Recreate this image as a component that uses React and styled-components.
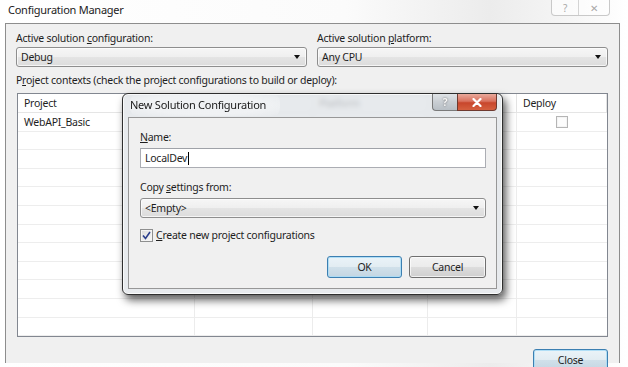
import React from "react";
import styled, { createGlobalStyle } from "styled-components";

const GlobalStyle = createGlobalStyle`
  html, body {
    margin: 0;
    padding: 0;
    background: #ffffff;
  }
  * {
    box-sizing: border-box;
  }
`;

const FONT = `"Segoe UI", "Noto Sans", "Liberation Sans", sans-serif`;

const columns = ["Project", "Configuration", "Platform", "Build", "Deploy"];
const rows = [{ project: "WebAPI_Basic", deploy: true }, ...Array(11).fill({})];

const Screen = styled.div`
  position: relative;
  width: 628px;
  height: 367px;
  overflow: hidden;
  display: flex;
  flex-direction: column;
  font-family: ${FONT};
  font-size: 10.5px;
  letter-spacing: -0.25px;
  color: #1e1e1e;
  background: linear-gradient(
    to right,
    #ffffff 0%,
    #fbfbfb 55%,
    #ececec 78%,
    #f5f5f5 90%,
    #ffffff 100%
  );
`;

const TitleBar = styled.div`
  height: 23px;
  flex: 0 0 auto;
  display: flex;
  justify-content: space-between;
  align-items: flex-start;
  padding-left: 8px;
`;

const Caption = styled.div`
  font-size: 11px;
  line-height: 20px;
  color: #222;
`;

const CaptionButtons = styled.div`
  display: flex;
  height: 16px;
  margin-right: 18px;
  border: 1px solid #c9c9c9;
  border-top: none;
  border-radius: 0 0 4px 4px;
  background: rgba(255, 255, 255, 0.6);
`;

const CaptionButton = styled.div`
  width: ${(p) => p.$w}px;
  display: flex;
  align-items: center;
  justify-content: center;
  font-size: 10px;
  color: #a8a8a8;
  & + & {
    border-left: 1px solid #d4d4d4;
  }
`;

const Frame = styled.div`
  margin-left: 5px;
  width: 615px;
  height: 340px;
  flex: 0 0 auto;
  border: 1px solid #8d8d8d;
  border-bottom: none;
  background: #f0f0f0;
  padding: 7px 11px 0 10px;
  display: flex;
  flex-direction: column;
`;

const SelectRow = styled.div`
  display: grid;
  grid-template-columns: 1fr 1fr;
  column-gap: 10px;
  flex: 0 0 auto;
`;

const Field = styled.div`
  display: flex;
  flex-direction: column;
`;

const Label = styled.div`
  flex: 0 0 auto;
  line-height: 15px;
  margin: ${(p) => p.$m || "0 0 1px 0"};
  white-space: nowrap;
`;

const Combo = styled.div`
  position: relative;
  flex: 0 0 auto;
  height: ${(p) => p.$h || 20}px;
  border: 1px solid #8e8e8e;
  border-radius: 3px;
  background: linear-gradient(
    to bottom,
    #f6f6f6 0%,
    #efefef 50%,
    #e4e4e4 51%,
    #dcdcdc 100%
  );
  box-shadow: inset 0 0 0 1px rgba(255, 255, 255, 0.7);
  display: flex;
  align-items: center;
  padding-left: 4px;
  line-height: 15px;
`;

const Arrow = styled.span`
  position: absolute;
  right: 6px;
  top: 50%;
  margin-top: -2px;
  width: 0;
  height: 0;
  border-left: 3.5px solid transparent;
  border-right: 3.5px solid transparent;
  border-top: 4px solid #111;
`;

const Grid = styled.div`
  flex: 0 0 244px;
  margin: 0 0 0 1px;
  height: 244px;
  border: 1px solid #828790;
  background: #ffffff;
  display: grid;
  grid-template-columns: 177px 118px 115px 89px 1fr;
  grid-template-rows: 19px repeat(12, 18.6px);
  overflow: hidden;
`;

const HeadCell = styled.div`
  padding-left: 6px;
  line-height: 19px;
  border-right: 1px solid #e3e3e3;
  border-bottom: 1px solid #e5e5e5;
  white-space: nowrap;
  &:last-child {
    border-right: none;
  }
`;

const Cell = styled.div`
  padding-left: ${(p) => (p.$center ? 0 : 6)}px;
  display: flex;
  align-items: center;
  justify-content: ${(p) => (p.$center ? "center" : "flex-start")};
  border-right: 1px solid #ececec;
  border-bottom: 1px solid #ededed;
  &:nth-child(5n) {
    border-right: none;
  }
`;

const Footer = styled.div`
  flex: 0 0 auto;
  display: flex;
  justify-content: flex-end;
  margin-top: 12px;
`;

const Button = styled.div`
  width: ${(p) => p.$w || 75}px;
  height: 22px;
  border: 1px solid ${(p) => (p.$default ? "#3c7fb1" : "#707070")};
  border-radius: 3px;
  background: ${(p) =>
    p.$default
      ? "linear-gradient(to bottom, #eaf3f8 0%, #e2ecf2 50%, #d0e0ea 51%, #c4d6e2 100%)"
      : "linear-gradient(to bottom, #f2f2f2 0%, #ebebeb 50%, #dddddd 51%, #cfcfcf 100%)"};
  box-shadow: inset 0 0 0 1px
    ${(p) => (p.$default ? "rgba(170, 220, 245, 0.9)" : "rgba(255, 255, 255, 0.7)")};
  display: flex;
  align-items: center;
  justify-content: center;
  line-height: 15px;
`;

const Dialog = styled.div`
  position: absolute;
  left: 122px;
  top: 93px;
  width: 381px;
  height: 202px;
  border: 1px solid #2e2e2e;
  border-radius: 6px;
  background: rgba(224, 228, 232, 0.78);
  backdrop-filter: blur(2.5px);
  box-shadow: inset 0 0 0 1px rgba(255, 255, 255, 0.75),
    3px 5px 8px rgba(0, 0, 0, 0.65);
  display: flex;
  flex-direction: column;
`;

const DialogHead = styled.div`
  height: 23px;
  display: flex;
  justify-content: space-between;
  align-items: flex-start;
  padding-left: 7px;
`;

const DialogTitle = styled.div`
  font-size: 11px;
  line-height: 22px;
  color: #1a1a1a;
  padding-right: 14px;
  border-radius: 8px;
  background: radial-gradient(
    ellipse at center,
    rgba(240, 242, 244, 0.95) 60%,
    rgba(240, 242, 244, 0) 100%
  );
`;

const HeadButtons = styled.div`
  display: flex;
  margin-right: 5px;
  height: 17px;
`;

const HelpBtn = styled.div`
  width: 25px;
  border: 1px solid #7a7a7a;
  border-top: none;
  border-right: none;
  border-radius: 0 0 0 4px;
  background: linear-gradient(to bottom, #dfe3e6 0%, #c9ced3 50%, #b8bfc5 100%);
  display: flex;
  align-items: center;
  justify-content: center;
  font-size: 10px;
  font-weight: bold;
  color: #f8f8f8;
  text-shadow: 0 0 2px #5c5c5c;
`;

const CloseBtn = styled.div`
  width: 40px;
  border: 1px solid #6e3a30;
  border-top: none;
  border-radius: 0 0 4px 0;
  background: linear-gradient(to bottom, #e9a99b 0%, #d9725f 45%, #c8462c 55%, #d5603f 100%);
  display: flex;
  align-items: center;
  justify-content: center;
`;

const Client = styled.div`
  flex: 1;
  margin: 0 5px 5px 5px;
  border: 1px solid #979797;
  background: #f0f0f0;
  padding: 12px 10px 0 11px;
  display: flex;
  flex-direction: column;
`;

const TextBox = styled.div`
  height: 20px;
  flex: 0 0 auto;
  border: 1px solid #abadb3;
  border-top-color: #9fa2a8;
  background: #ffffff;
  display: flex;
  align-items: center;
  padding-left: 4px;
  line-height: 15px;
`;

const Caret = styled.span`
  display: inline-block;
  width: 1px;
  height: 13px;
  background: #000;
  margin-left: 0.5px;
`;

const CheckRow = styled.div`
  display: flex;
  align-items: center;
  gap: 3px;
  margin-top: 10px;
  line-height: 15px;
`;

const Box = styled.div`
  width: ${(p) => p.$size || 13}px;
  height: ${(p) => p.$size || 13}px;
  border: 1px solid ${(p) => (p.$light ? "#b5b5b5" : "#8e8f8f")};
  background: ${(p) =>
    p.$light ? "#fcfcfc" : "linear-gradient(to bottom right, #dcdcdc, #f7f7f7)"};
  box-shadow: inset 0 0 0 1px #f4f4f4;
  display: flex;
  align-items: center;
  justify-content: center;
`;

const DialogButtons = styled.div`
  display: flex;
  justify-content: flex-end;
  gap: 7px;
  margin-top: 13px;
`;

const Check = () => (
  <svg width="9" height="9" viewBox="0 0 9 9">
    <path d="M1 4.5 L3.5 7.5 L8 1" fill="none" stroke="#2a3e8c" strokeWidth="1.6" />
  </svg>
);

const CloseX = () => (
  <svg width="10" height="9" viewBox="0 0 10 9">
    <path
      d="M1.5 1 L8.5 8 M8.5 1 L1.5 8"
      stroke="#ffffff"
      strokeWidth="2.2"
      strokeLinecap="round"
    />
  </svg>
);

export default function App() {
  return (
    <>
      <GlobalStyle />
      <Screen>
        <TitleBar>
          <Caption>Configuration Manager</Caption>
          <CaptionButtons>
            <CaptionButton $w={26}>?</CaptionButton>
            <CaptionButton $w={31}>✕</CaptionButton>
          </CaptionButtons>
        </TitleBar>

        <Frame>
          <SelectRow>
            <Field>
              <Label>
                Active solution <u>c</u>onfiguration:
              </Label>
              <Combo>
                Debug
                <Arrow />
              </Combo>
            </Field>
            <Field>
              <Label>
                Active solution <u>p</u>latform:
              </Label>
              <Combo>
                Any CPU
                <Arrow />
              </Combo>
            </Field>
          </SelectRow>

          <Label $m="6px 0 5px 0">
            P<u>r</u>oject contexts (check the project configurations to build or deploy):
          </Label>

          <Grid>
            {columns.map((c) => (
              <HeadCell key={c}>{c}</HeadCell>
            ))}
            {rows.map((r, i) => (
              <React.Fragment key={i}>
                <Cell>{r.project}</Cell>
                <Cell />
                <Cell />
                <Cell />
                <Cell $center>{r.deploy && <Box $size={12} $light />}</Cell>
              </React.Fragment>
            ))}
          </Grid>

          <Footer>
            <Button $default>Close</Button>
          </Footer>
        </Frame>

        <Dialog>
          <DialogHead>
            <DialogTitle>New Solution Configuration</DialogTitle>
            <HeadButtons>
              <HelpBtn>?</HelpBtn>
              <CloseBtn>
                <CloseX />
              </CloseBtn>
            </HeadButtons>
          </DialogHead>
          <Client>
            <Label $m="0 0 3px 0">
              <u>N</u>ame:
            </Label>
            <TextBox>
              LocalDev
              <Caret />
            </TextBox>
            <Label $m="12px 0 3px 0">
              Copy <u>s</u>ettings from:
            </Label>
            <Combo $h={20}>
              &lt;Empty&gt;
              <Arrow />
            </Combo>
            <CheckRow>
              <Box>
                <Check />
              </Box>
              <span>
                <u>C</u>reate new project configurations
              </span>
            </CheckRow>
            <DialogButtons>
              <Button $default>OK</Button>
              <Button $w={77}>Cancel</Button>
            </DialogButtons>
          </Client>
        </Dialog>
      </Screen>
    </>
  );
}
